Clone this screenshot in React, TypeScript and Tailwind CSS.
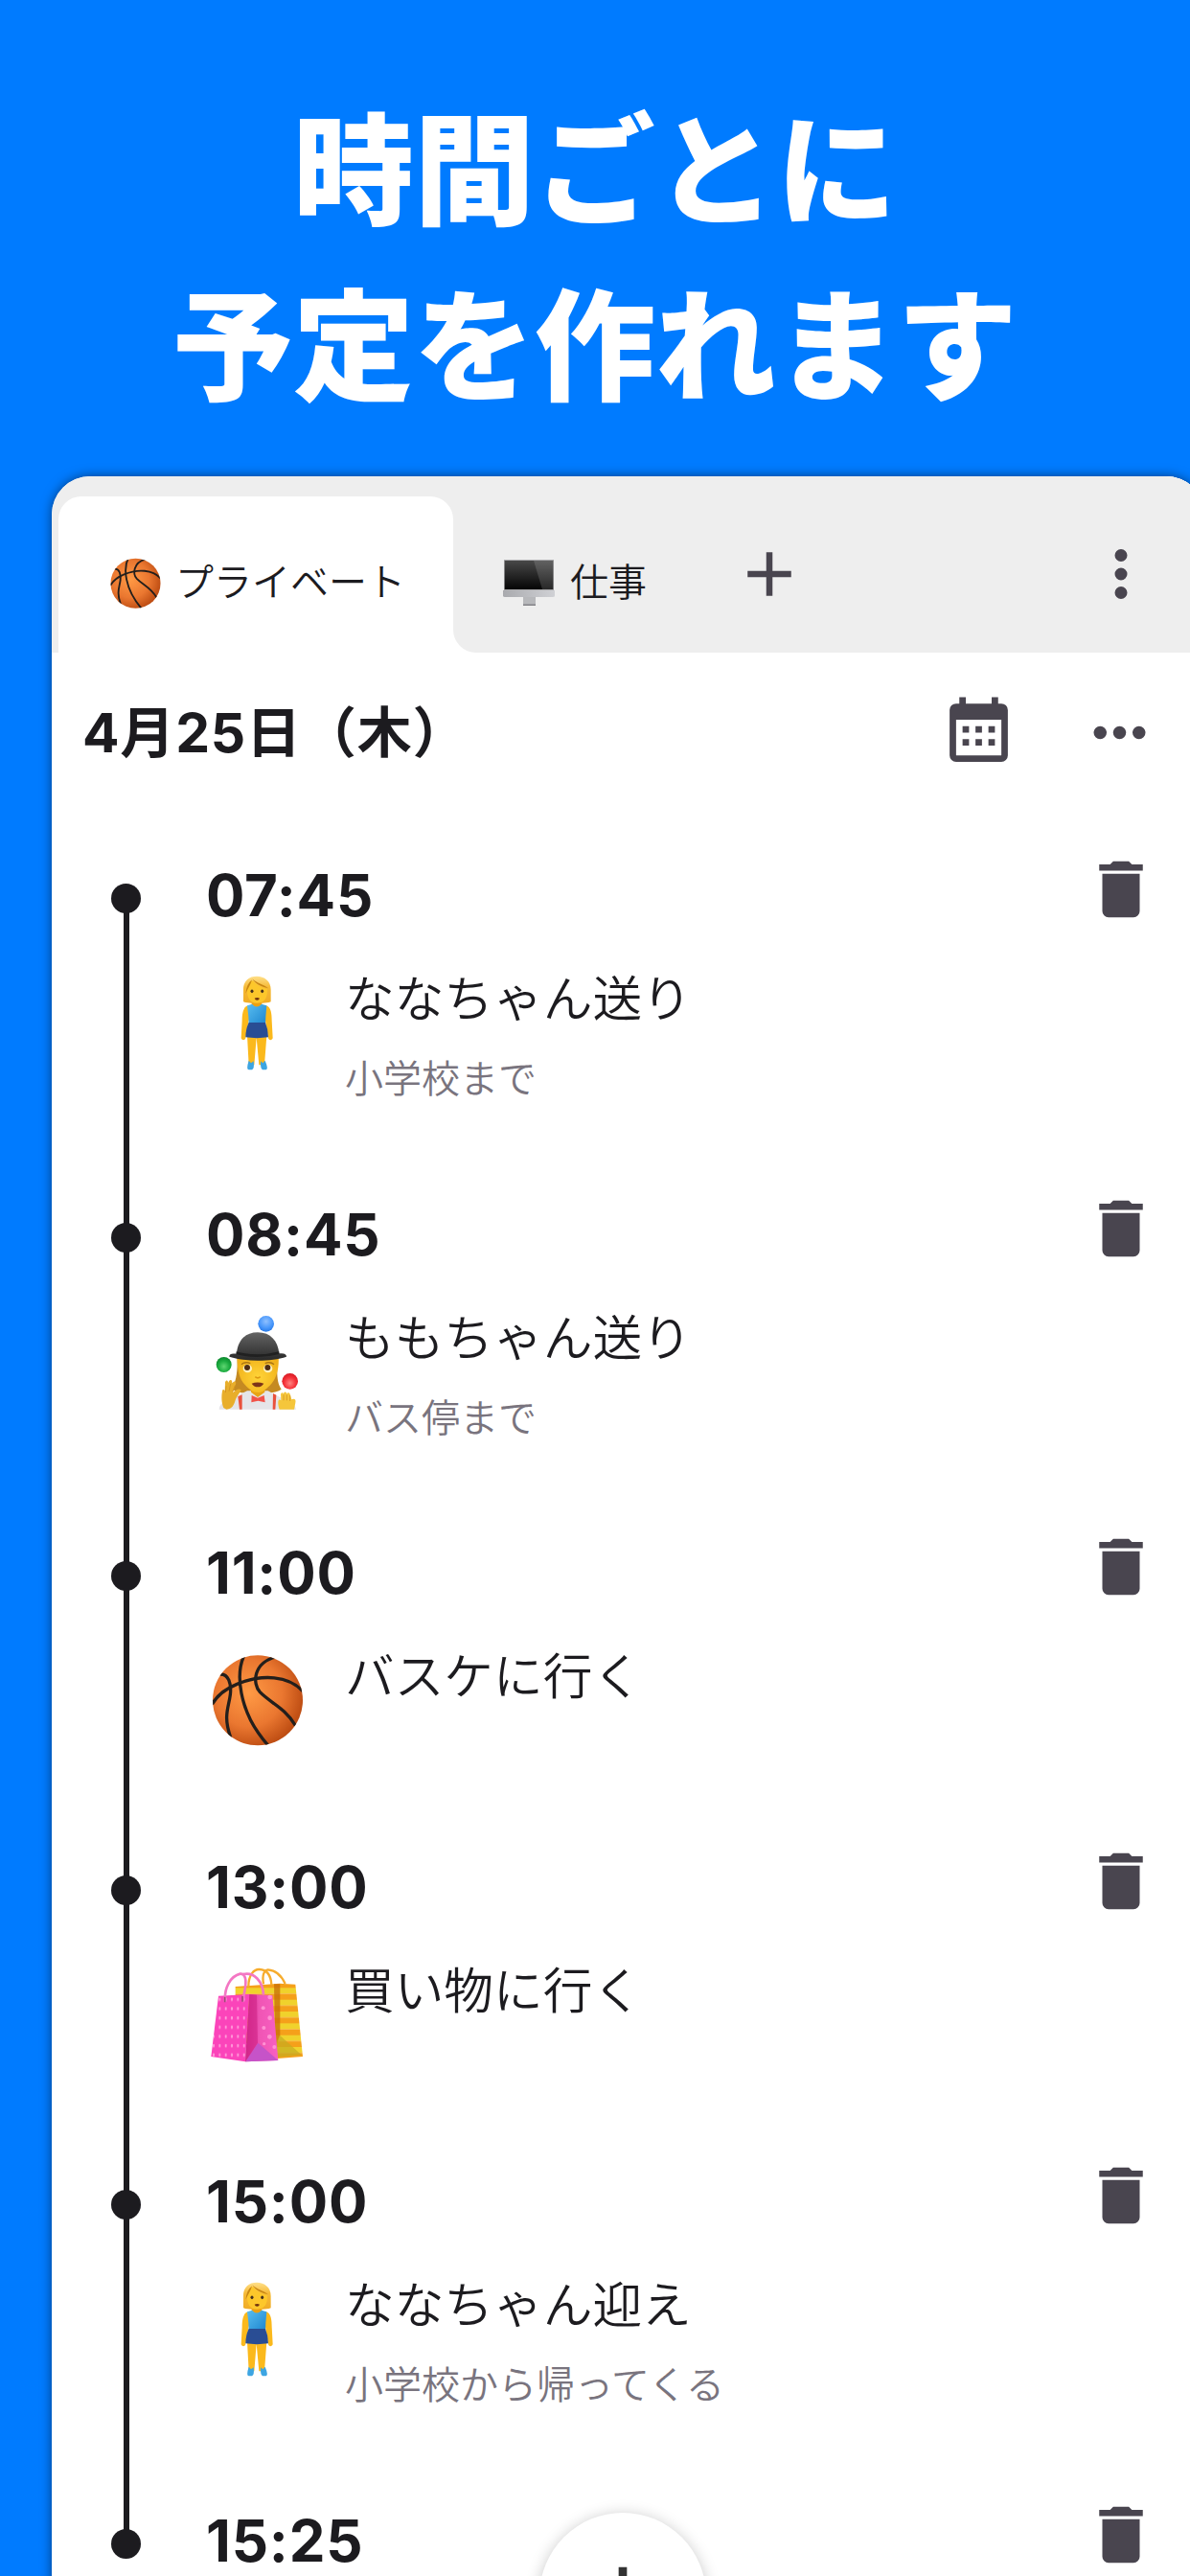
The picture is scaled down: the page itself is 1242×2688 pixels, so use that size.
import React from "react";

type EmojiName = "girl" | "juggler" | "basketball" | "bags";

type Plan = {
    time: string;
    emoji?: EmojiName;
    title?: string;
    note?: string;
    height: string;
};

const plans: Plan[] = [
    { time: "07:45", emoji: "girl", title: "ななちゃん送り", note: "小学校まで", height: "h-[353.5px]" },
    { time: "08:45", emoji: "juggler", title: "ももちゃん送り", note: "バス停まで", height: "h-[353.5px]" },
    { time: "11:00", emoji: "basketball", title: "バスケに行く", height: "h-[328px]" },
    { time: "13:00", emoji: "bags", title: "買い物に行く", height: "h-[328px]" },
    { time: "15:00", emoji: "girl", title: "ななちゃん迎え", note: "小学校から帰ってくる", height: "h-[353.5px]" },
    { time: "15:25", height: "h-[353.5px]" },
];

function Icon({ path, className }: { path: string; className: string }) {
    return (
        <svg viewBox="0 0 24 24" fill="currentColor" className={className}>
            <path d={path} />
        </svg>
    );
}

const icons = {
    plus: "M19 13h-6v6h-2v-6H5v-2h6V5h2v6h6v2Z",
    dotsVertical:
        "M12 16a2 2 0 1 1 0 4 2 2 0 0 1 0-4m0-6a2 2 0 1 1 0 4 2 2 0 0 1 0-4m0-6a2 2 0 1 1 0 4 2 2 0 0 1 0-4Z",
    dotsHorizontal:
        "M16 12a2 2 0 1 1 4 0 2 2 0 0 1-4 0m-6 0a2 2 0 1 1 4 0 2 2 0 0 1-4 0m-6 0a2 2 0 1 1 4 0 2 2 0 0 1-4 0Z",
    calendar:
        "M9 10v2H7v-2h2m4 0v2h-2v-2h2m4 0v2h-2v-2h2m2-7a2 2 0 0 1 2 2v14a2 2 0 0 1-2 2H5a2 2 0 0 1-2-2V5a2 2 0 0 1 2-2h1V1h2v2h8V1h2v2h1m0 16V8H5v11h14M9 14v2H7v-2h2m4 0v2h-2v-2h2m4 0v2h-2v-2h2Z",
    trash: "M19 4h-3.5l-1-1h-5l-1 1H5v2h14M6 19a2 2 0 0 0 2 2h8a2 2 0 0 0 2-2V7H6v12Z",
};

function Basketball({ className, id }: { className: string; id: string }) {
    return (
        <svg viewBox="0 0 330 336" className={className}>
            <defs>
                <radialGradient id={id} cx="0.4" cy="0.42" r="0.62">
                    <stop offset="0" stopColor="#ff9a45" />
                    <stop offset="0.6" stopColor="#ea7730" />
                    <stop offset="1" stopColor="#bd4c12" />
                </radialGradient>
                <clipPath id={`${id}-clip`}>
                    <circle cx="165" cy="172" r="141" />
                </clipPath>
            </defs>
            <circle cx="165" cy="172" r="141" fill={`url(#${id})`} />
            <g clipPath={`url(#${id}-clip)`} fill="none" stroke="#231f1c" strokeWidth="10">
                <path d="M22 184C42 150 70 133 100 121C180 88 262 95 306 143" />
                <path d="M124 28C108 60 104 100 114 150C126 210 150 258 200 316" />
                <path d="M222 36C150 54 148 120 172 146C205 180 250 195 284 252" />
                <path d="M46 90C74 88 83 120 79 154C74 195 56 220 80 288" />
            </g>
        </svg>
    );
}

function Girl({ className }: { className: string }) {
    return (
        <svg viewBox="0 0 330 336" className={className}>
            <defs>
                <linearGradient id="girl-top" x1="0" y1="0" x2="1" y2="1">
                    <stop offset="0" stopColor="#59bdf0" />
                    <stop offset="1" stopColor="#1c85cf" />
                </linearGradient>
                <linearGradient id="girl-hair" x1="0" y1="0" x2="0" y2="1">
                    <stop offset="0" stopColor="#ffe08a" />
                    <stop offset="0.4" stopColor="#f6ba38" />
                    <stop offset="1" stopColor="#f0ac25" />
                </linearGradient>
            </defs>
            <path d="M132 212l5 92h17l7-86 8 86h17l7-92Z" fill="#fbb91c" />
            <path d="M137 290q-9 28 0 29h10q8-3 5-27l-8 6ZM188 290q11 26 3 29h-11q-7-3-6-27l7 6Z" fill="#3da5e2" />
            <path d="M134 118c-15 4-18 27-18 47l-3 54c1 8 13 9 14 0l12-65M191 118c16 4 18 27 18 47l3 54c-1 8-13 9-14 0l-11-65" fill="#fbb91c" />
            <path d="M146 98h32v22l-16 9-16-9Z" fill="#eca011" />
            <path d="M132 118l15-5q15 17 30 0l16 5-3 34-1 25h-52l-1-25Z" fill="url(#girl-top)" />
            <path d="M137 171h52q9 22 9 46-36 5-71 0 0-25 10-46Z" fill="#294d94" />
            <path d="M120 106V67c0-27 18-41 42-41s44 15 44 42v38c-13 5-29 5-42 3-16 2-31 2-44-3Z" fill="url(#girl-hair)" />
            <path d="M132 68c0-14 8-27 19-28 10 14 27 22 44 27 1 28-10 43-32 43s-32-17-31-42Z" fill="#fdc72b" />
            <path d="M148 34c10 17 28 25 50 30-16-13-35-15-50-30ZM147 37c-12 10-18 24-20 43 8-17 16-27 20-43Z" fill="#c98713" />
            <ellipse cx="147" cy="73" rx="4.5" ry="5.5" fill="#48311d" />
            <ellipse cx="179" cy="73" rx="4.5" ry="5.5" fill="#48311d" />
            <path d="M155 95q8-4 16 0-2 6-8 6t-8-6Z" fill="#70330d" />
        </svg>
    );
}

function Juggler({ className }: { className: string }) {
    return (
        <svg viewBox="0 0 330 336" className={className}>
            <defs>
                <linearGradient id="hat" x1="0" y1="0" x2="0" y2="1">
                    <stop offset="0" stopColor="#646464" />
                    <stop offset="1" stopColor="#282828" />
                </linearGradient>
                <radialGradient id="jug-face" cx="0.5" cy="0.6" r="0.6">
                    <stop offset="0" stopColor="#ffd438" />
                    <stop offset="1" stopColor="#f0b01a" />
                </radialGradient>
                <radialGradient id="ball-blue" cx="0.5" cy="0.35" r="0.6">
                    <stop offset="0" stopColor="#8fc0ff" />
                    <stop offset="0.7" stopColor="#4897fb" />
                    <stop offset="1" stopColor="#2f80ec" />
                </radialGradient>
                <radialGradient id="ball-green" cx="0.5" cy="0.62" r="0.6">
                    <stop offset="0" stopColor="#5fd672" />
                    <stop offset="0.6" stopColor="#1cac40" />
                    <stop offset="1" stopColor="#0c8a2e" />
                </radialGradient>
                <radialGradient id="ball-red" cx="0.5" cy="0.62" r="0.6">
                    <stop offset="0" stopColor="#ff8481" />
                    <stop offset="0.6" stopColor="#f5333a" />
                    <stop offset="1" stopColor="#d91a24" />
                </radialGradient>
            </defs>
            <path d="M100 150c3 45-1 82-17 105 18 16 50 15 76 15s62 0 80-13c-17-24-14-60-10-107Z" fill="#c58a22" />
            <path d="M44 320q2-20 22-27l66-31h65l38 20q45 12 50 38Z" fill="#e5e5e9" />
            <path d="M144 236h43v30l-22 16-21-16Z" fill="#e8a417" />
            <path d="M101 148h129c3 50-8 79-27 97-14 13-23 22-38 22s-27-10-40-24c-18-19-26-50-24-95Z" fill="url(#jug-face)" />
            <ellipse cx="133" cy="192" rx="14" ry="13" fill="#fff2c0" />
            <ellipse cx="197" cy="192" rx="14" ry="13" fill="#fff2c0" />
            <circle cx="132" cy="189" r="9" fill="#4e2d14" />
            <circle cx="196" cy="189" r="9" fill="#4e2d14" />
            <path d="M114 179q12-10 28-3M188 176q16-7 28 3" stroke="#aa7413" strokeWidth="4" fill="none" />
            <path d="M157 218q8 7 16 0" stroke="#dc9811" strokeWidth="5" fill="none" />
            <path d="M146 239q18-7 38 0-7 11-19 11t-19-11Z" fill="#7c3419" />
            <path d="M76 155c0-9 7-11 23-9 3-40 25-67 66-67s63 27 67 66c16-2 23 2 23 10-48 16-131 16-179 0Z" fill="url(#hat)" />
            <path d="M98 139q66 18 134 0v8q-67 18-135 0Z" fill="#202020" />
            <path d="M116 274v46h-8l-5-40ZM213 270l10 5-3 45h-8Z" fill="#e9513d" />
            <path d="M146 276l19 8 20-8 3 22-22-5-21 5Z" fill="#f15249" />
            <path d="M58 315c-7-17-7-37-4-52 2-8 9-5 8 3l1-31c3-9 10-6 9 2l4-7c5-5 11 0 8 8l6-5c6-2 9 4 5 11l-8 24c8-9 18-15 25-10 3 5-11 17-17 33-5 17-10 27-28 29Z" fill="#e8ae2b" />
            <path d="M64 267l2-20M75 263l5-23M86 265l8-20" stroke="#cb8a1c" strokeWidth="2" />
            <path d="M233 320c-6-17-5-29 0-31l5 3-1-20c4-7 9-4 9 2v-5c4-6 10-3 10 3 4-8 10-4 11 3l4 14c8-5 15 0 12 10l-4 21Z" fill="#f5c63b" />
            <path d="M246 292v-18M256 292v-18M266 294v-18" stroke="#cb8a1c" strokeWidth="2" />
            <circle cx="191" cy="52" r="25" fill="url(#ball-blue)" />
            <circle cx="59" cy="180" r="24" fill="url(#ball-green)" />
            <circle cx="266" cy="232" r="25" fill="url(#ball-red)" />
        </svg>
    );
}

function Bags({ className }: { className: string }) {
    return (
        <svg viewBox="0 0 330 336" className={className}>
            <defs>
                <linearGradient id="pink-side" x1="0" y1="0" x2="1" y2="0">
                    <stop offset="0" stopColor="#d42c8d" />
                    <stop offset="0.45" stopColor="#f055b5" />
                    <stop offset="1" stopColor="#f860c2" />
                </linearGradient>
                <pattern id="dots" width="19" height="29" patternUnits="userSpaceOnUse">
                    <ellipse cx="8" cy="8" rx="3" ry="5.5" fill="#ff9cd9" />
                </pattern>
                <pattern id="stripes" width="40" height="37" y="88" patternUnits="userSpaceOnUse">
                    <path d="M0 0h40v18H0Z" fill="#f0d22c" />
                    <path d="M0 18h40v19H0Z" fill="#f5a01a" />
                </pattern>
            </defs>
            <path d="M95 84l139-10 49 3 23 226-89 7L95 240Z" fill="url(#stripes)" />
            <path d="M216 76h19v160l-15 40Z" fill="#c66d06" opacity="0.75" />
            <path d="M234 236l68 62-77 7-5-40Z" fill="#c5ab20" opacity="0.7" />
            <path d="M136 83c0-37 18-54 34-53 24 1 36 15 38 48M183 76c-5-28 2-44 14-45 26 2 43 20 54 44" fill="none" stroke="#f6ac2d" strokeWidth="7" />
            <path d="M42 113l97-5-13 211-107-16Z" fill="#fb44ba" />
            <path d="M42 113l97-5-13 211-107-16Z" fill="url(#dots)" />
            <path d="M139 108l72 3 18 204-103 4Z" fill="url(#pink-side)" />
            <path d="M166 260l63 55-103 4Z" fill="#c653c8" />
            <path d="M139 108l23 2 3 150-39 59Z" fill="#cf2285" opacity="0.6" />
            <g fill="#ff91d3">
                <circle cx="203" cy="117" r="7" />
                <circle cx="182" cy="151" r="6" />
                <circle cx="203" cy="182" r="7" />
                <circle cx="184" cy="213" r="6" />
                <circle cx="202" cy="241" r="7" />
                <circle cx="185" cy="263" r="5" />
                <circle cx="217" cy="273" r="6" />
            </g>
            <path d="M63 132c-4-45 17-81 47-88 17-2 19 19 16 42l-8 46M120 45c33-7 61 21 63 65" fill="none" stroke="#f377c3" strokeWidth="8" />
            <path d="M62 116v17M117 114v17" stroke="#a14778" strokeWidth="5" />
        </svg>
    );
}

function Monitor({ className }: { className: string }) {
    return (
        <svg viewBox="0 0 54 48" className={className}>
            <defs>
                <linearGradient id="screen" x1="0" y1="0" x2="0" y2="1">
                    <stop offset="0" stopColor="#484848" />
                    <stop offset="1" stopColor="#050505" />
                </linearGradient>
                <linearGradient id="stand" x1="0" y1="0" x2="1" y2="0">
                    <stop offset="0" stopColor="#a9aaae" />
                    <stop offset="1" stopColor="#d0d1d5" />
                </linearGradient>
            </defs>
            <path d="M21 38h13v10H21Z" fill="#b7b8bb" />
            <path d="M21 46.5h13V48H21Z" fill="#828387" />
            <path d="M1 0h52v32H1Z" fill="#a8a8aa" />
            <path d="M1.7 1h50.6v30H1.7Z" fill="url(#screen)" />
            <path d="M32 1h20.3v30H41Z" fill="#ffffff" opacity="0.14" />
            <path d="M0 32h54v5.5q0 1.5-2 1.5H2q-2 0-2-1.5Z" fill="url(#stand)" />
        </svg>
    );
}

function Emoji({ name }: { name: EmojiName }) {
    const size = "h-[112px] w-[110px] shrink-0";
    if (name === "girl") return <Girl className={size} />;
    if (name === "juggler") return <Juggler className={size} />;
    if (name === "bags") return <Bags className={size} />;
    return <Basketball id="ball-lg" className={size} />;
}

function PlanRow({ plan, first, last }: { plan: Plan; first: boolean; last: boolean }) {
    return (
        <div className={`flex shrink-0 ${plan.height}`}>
            <div className="ml-[62px] flex w-[31px] flex-col items-center">
                <div className={`h-[34px] w-[6px] ${first ? "" : "bg-[#1c1b1f]"}`} />
                <div className="-my-px size-[31px] shrink-0 rounded-full bg-[#1c1b1f]" />
                {!last && <div className="w-[6px] flex-1 bg-[#1c1b1f]" />}
            </div>
            <div className="ml-[67px] flex-1">
                <div className="ml-[1px] text-[60px] leading-[90px] font-bold tracking-[0.8px]">{plan.time}</div>
                {plan.emoji && (
                    <div className="mt-[31px] flex">
                        <Emoji name={plan.emoji} />
                        <div className="ml-[36px] whitespace-nowrap">
                            <p className="text-[51.7px] leading-[64px] font-[350]">{plan.title}</p>
                            {plan.note && (
                                <p className="mt-[27px] text-[40px] leading-[50px] font-[350] text-[#79747e]">
                                    {plan.note}
                                </p>
                            )}
                        </div>
                    </div>
                )}
            </div>
            <Icon path={icons.trash} className="mr-[48px] size-[78px] text-[#49454f]" />
        </div>
    );
}

export default function App() {
    return (
        <div className="relative flex h-[2688px] w-[1242px] flex-col overflow-hidden bg-[#007bff] font-['Inter','Noto_Sans_CJK_JP',sans-serif]">
            <h1 className="h-[497px] shrink-0 pt-[79px] text-center font-['Noto_Sans_CJK_JP',sans-serif] text-[126px] leading-[183px] font-black text-white">
                時間ごとに
                <br />
                予定を作れます
            </h1>

            <div className="ml-[54px] flex h-[2260px] w-[1203px] shrink-0 flex-col overflow-hidden rounded-t-[40px] bg-white text-[#1c1b1f] shadow-[0_0_12px_rgba(0,0,0,0.5)]">
                <div className="flex h-[184px] shrink-0 bg-[#eeeeee]">
                    <div className="mt-[21px] ml-[7px] flex w-[412px] items-center rounded-t-[24px] bg-white pt-[17px] pl-[50px]">
                        <Basketball id="ball-sm" className="h-[62px] w-[61px]" />
                        <span className="ml-[11px] text-[40px] font-[350] whitespace-nowrap">プライベート</span>
                    </div>
                    <div className="flex-1 bg-white">
                        <div className="flex h-full items-center rounded-bl-[24px] bg-[#eeeeee] pt-[2px]">
                            <div className="flex items-center pt-[36px] pl-[52px]">
                                <Monitor className="h-[48px] w-[54px]" />
                                <span className="ml-[16px] text-[40px] font-[350] whitespace-nowrap">仕事</span>
                            </div>
                            <Icon path={icons.plus} className="mt-[18px] ml-[89px] size-[78px] text-[#49454f]" />
                            <Icon
                                path={icons.dotsVertical}
                                className="mt-[18px] mr-[48px] ml-auto size-[78px] text-[#49454f]"
                            />
                        </div>
                    </div>
                </div>

                <div className="mb-[42px] flex h-[166px] shrink-0 items-center pl-[32px] text-[#49454f]">
                    <h2 className="pt-[2px] text-[57px] font-bold tracking-[0.8px] text-[#1c1b1f]">4月25日（木）</h2>
                    <Icon path={icons.calendar} className="ml-auto size-[81px]" />
                    <Icon path={icons.dotsHorizontal} className="mr-[48px] ml-[66px] size-[81px]" />
                </div>

                {plans.map((plan, i) => (
                    <PlanRow key={plan.time} plan={plan} first={i === 0} last={i === plans.length - 1} />
                ))}
            </div>

            {/* floating add button, cut by the bottom edge */}
            <button className="absolute top-[2622px] left-[563px] flex size-[174px] items-center justify-center rounded-full bg-white shadow-[0_2px_16px_rgba(0,0,0,0.22)]">
                <Icon path={icons.plus} className="size-[104px] text-[#333333]" />
            </button>
        </div>
    );
}
